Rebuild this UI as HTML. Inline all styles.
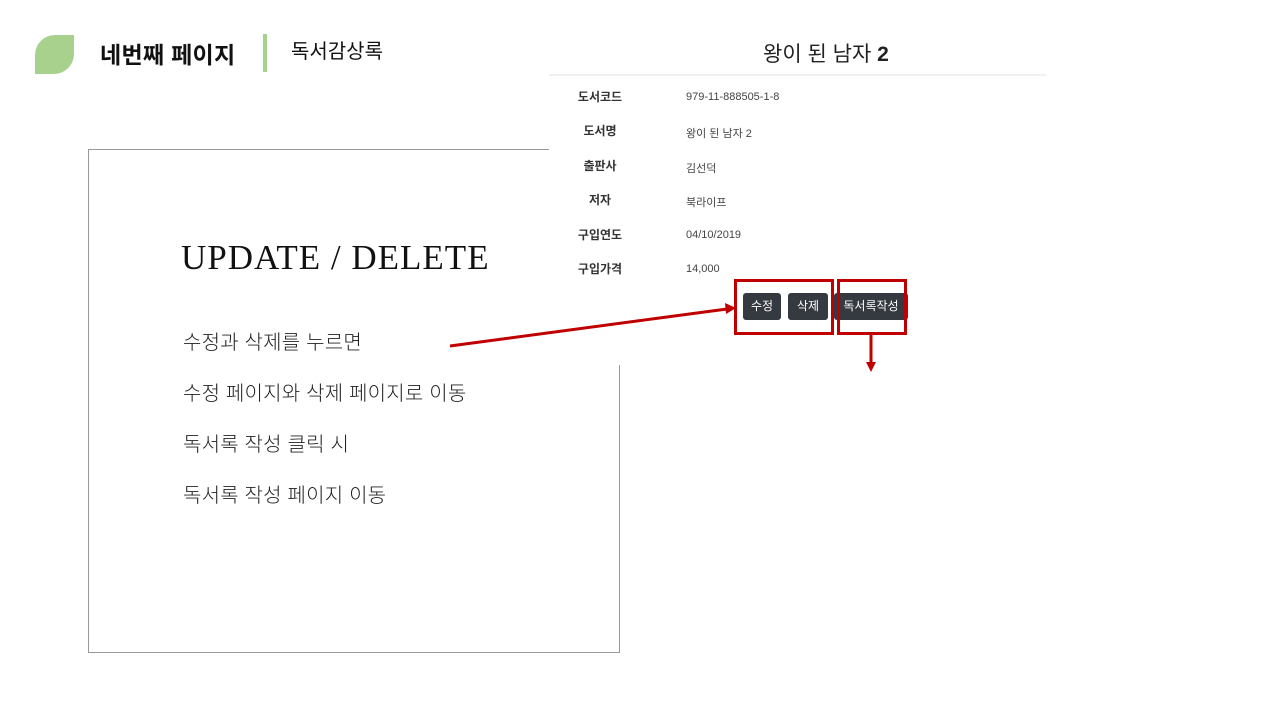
<!DOCTYPE html>
<html><head><meta charset="utf-8"><style>
body{margin:0;width:1280px;height:720px;background:#fff;position:relative;overflow:hidden;font-family:"Liberation Sans","Noto Sans CJK KR",sans-serif;color:#222}
.a{position:absolute;white-space:nowrap}
.lbl{position:absolute;left:560px;width:80px;text-align:center;font-size:12px;font-weight:bold;color:#333}
.val{position:absolute;left:686px;font-size:11px;color:#444}
.btn{position:absolute;top:293px;height:27px;background:#343a40;color:#fff;font-size:12px;border-radius:3px;line-height:27px;text-align:center}
.rb{position:absolute;border:3px solid #c00000;box-sizing:border-box}
.k{font-size:20px;color:#222;font-weight:300;left:183px;letter-spacing:0.2px}
</style></head><body>
<div class="a" style="left:35px;top:35px;width:39px;height:39px;background:#a9d18e;border-radius:20px 0 20px 0"></div>
<div class="a" style="left:100px;top:36px;font-size:23px;font-weight:bold;color:#111;letter-spacing:0.3px">네번째 페이지</div>
<div class="a" style="left:263px;top:34px;width:4px;height:38px;background:#a9d18e"></div>
<div class="a" style="left:291px;top:35px;font-size:20px;color:#111">독서감상록</div>

<div class="a" style="left:88px;top:149px;width:530px;height:502px;border:1px solid #999"></div>
<div class="a" style="left:181px;top:238px;font-family:'Liberation Serif',serif;font-size:35px;letter-spacing:1px;color:#111">UPDATE / DELETE</div>
<div class="a k" style="top:326px">수정과 삭제를 누르면</div>
<div class="a k" style="top:377px">수정 페이지와 삭제 페이지로 이동</div>
<div class="a k" style="top:428px">독서록 작성 클릭 시</div>
<div class="a k" style="top:479px">독서록 작성 페이지 이동</div>

<div class="a" style="left:549px;top:28px;width:497px;height:337px;background:#fff"></div>
<div class="a" style="left:763px;top:38px;font-size:21px;color:#222">왕이 된 남자 <b>2</b></div>
<div class="a" style="left:549px;top:74px;width:497px;height:2px;background:#f0f0f0"></div>
<div class="lbl" style="top:88px">도서코드</div><div class="val" style="top:91px">979-11-888505-1-8</div>
<div class="lbl" style="top:122px">도서명</div><div class="val" style="top:125px">왕이 된 남자 2</div>
<div class="lbl" style="top:157px">출판사</div><div class="val" style="top:160px">김선덕</div>
<div class="lbl" style="top:191px">저자</div><div class="val" style="top:194px">북라이프</div>
<div class="lbl" style="top:226px">구입연도</div><div class="val" style="top:229px">04/10/2019</div>
<div class="lbl" style="top:260px">구입가격</div><div class="val" style="top:263px">14,000</div>
<div class="btn" style="left:743px;width:38px">수정</div>
<div class="btn" style="left:788px;width:40px">삭제</div>
<div class="btn" style="left:834px;width:74px">독서록작성</div>
<div class="rb" style="left:734px;top:279px;width:100px;height:56px"></div>
<div class="rb" style="left:837px;top:279px;width:70px;height:56px"></div>
<svg class="a" style="left:0;top:0" width="1280" height="720">
<line x1="450" y1="346" x2="727" y2="309" stroke="#c00000" stroke-width="3"/>
<polygon points="736,308 725,303 726,314" fill="#c00000"/>
<line x1="871" y1="334" x2="871" y2="363" stroke="#c00000" stroke-width="3"/>
<polygon points="866,362 876,362 871,372" fill="#c00000"/>
</svg>
</body></html>
